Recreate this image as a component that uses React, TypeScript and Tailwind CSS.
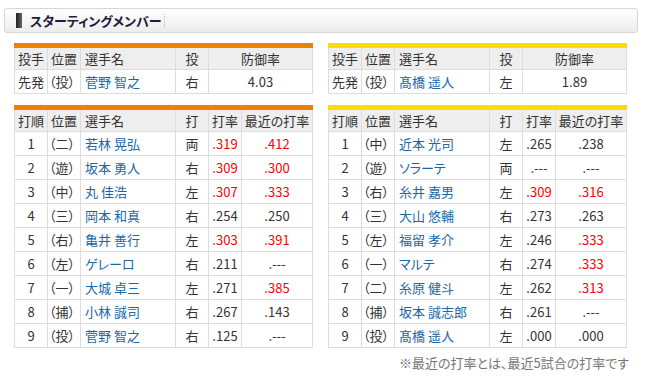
import React from 'react';

type Pitcher = { role: string; pos: string; name: string; hand: string; era: string };
type Batter = { no: number; pos: string; name: string; hand: string; avg: string; recent: string };

const giantsPitcher: Pitcher = { role: '先発', pos: '（投）', name: '菅野 智之', hand: '右', era: '4.03' };
const tigersPitcher: Pitcher = { role: '先発', pos: '（投）', name: '髙橋 遥人', hand: '左', era: '1.89' };

const giants: Batter[] = [
  { no: 1, pos: '（二）', name: '若林 晃弘', hand: '両', avg: '.319', recent: '.412' },
  { no: 2, pos: '（遊）', name: '坂本 勇人', hand: '右', avg: '.309', recent: '.300' },
  { no: 3, pos: '（中）', name: '丸 佳浩', hand: '左', avg: '.307', recent: '.333' },
  { no: 4, pos: '（三）', name: '岡本 和真', hand: '右', avg: '.254', recent: '.250' },
  { no: 5, pos: '（右）', name: '亀井 善行', hand: '左', avg: '.303', recent: '.391' },
  { no: 6, pos: '（左）', name: 'ゲレーロ', hand: '右', avg: '.211', recent: '.---' },
  { no: 7, pos: '（一）', name: '大城 卓三', hand: '左', avg: '.271', recent: '.385' },
  { no: 8, pos: '（捕）', name: '小林 誠司', hand: '右', avg: '.267', recent: '.143' },
  { no: 9, pos: '（投）', name: '菅野 智之', hand: '右', avg: '.125', recent: '.---' },
];

const tigers: Batter[] = [
  { no: 1, pos: '（中）', name: '近本 光司', hand: '左', avg: '.265', recent: '.238' },
  { no: 2, pos: '（遊）', name: 'ソラーテ', hand: '両', avg: '.---', recent: '.---' },
  { no: 3, pos: '（右）', name: '糸井 嘉男', hand: '左', avg: '.309', recent: '.316' },
  { no: 4, pos: '（三）', name: '大山 悠輔', hand: '右', avg: '.273', recent: '.263' },
  { no: 5, pos: '（左）', name: '福留 孝介', hand: '左', avg: '.246', recent: '.333' },
  { no: 6, pos: '（一）', name: 'マルテ', hand: '右', avg: '.274', recent: '.333' },
  { no: 7, pos: '（二）', name: '糸原 健斗', hand: '左', avg: '.262', recent: '.313' },
  { no: 8, pos: '（捕）', name: '坂本 誠志郎', hand: '右', avg: '.261', recent: '.---' },
  { no: 9, pos: '（投）', name: '髙橋 遥人', hand: '左', avg: '.000', recent: '.000' },
];

const isHot = (v: string) => v !== '.---' && parseFloat(v) >= 0.3;

const th = 'h-[24px] border border-[#dddddd] bg-[#eeeeee] font-normal p-0 leading-none';
const td = 'h-[24px] border border-[#dddddd] bg-white p-0 leading-none';

function PitcherTable({ p, bar }: { p: Pitcher; bar: string }) {
  return (
    <table className={`w-[299px] table-fixed border-collapse border-t-[5px] ${bar}`}>
      <colgroup>
        <col className="w-[33px]" />
        <col className="w-[33px]" />
        <col className="w-[95px]" />
        <col className="w-[33px]" />
        <col />
      </colgroup>
      <thead>
        <tr>
          <th className={`${th} text-left pl-[3px]`}>投手</th>
          <th className={`${th} text-left pl-[3px]`}>位置</th>
          <th className={`${th} text-left pl-[4px]`}>選手名</th>
          <th className={`${th} text-center`}>投</th>
          <th className={`${th} text-center`}>防御率</th>
        </tr>
      </thead>
      <tbody>
        <tr>
          <td className={`${td} text-left pl-[3px]`}>{p.role}</td>
          <td className={`${td} text-left pl-[1px]`}>{p.pos}</td>
          <td className={`${td} text-left pl-[4px] text-[#1a68a8]`}>{p.name}</td>
          <td className={`${td} text-center`}>{p.hand}</td>
          <td className={`${td} text-center`}>{p.era}</td>
        </tr>
      </tbody>
    </table>
  );
}

function LineupTable({ rows, bar }: { rows: Batter[]; bar: string }) {
  return (
    <table className={`w-[299px] table-fixed border-collapse border-t-[5px] ${bar}`}>
      <colgroup>
        <col className="w-[33px]" />
        <col className="w-[33px]" />
        <col className="w-[95px]" />
        <col className="w-[33px]" />
        <col className="w-[33px]" />
        <col />
      </colgroup>
      <thead>
        <tr>
          <th className={`${th} text-left pl-[3px]`}>打順</th>
          <th className={`${th} text-left pl-[3px]`}>位置</th>
          <th className={`${th} text-left pl-[4px]`}>選手名</th>
          <th className={`${th} text-center`}>打</th>
          <th className={`${th} text-center`}>打率</th>
          <th className={`${th} text-center`}>最近の打率</th>
        </tr>
      </thead>
      <tbody>
        {rows.map((r) => (
          <tr key={r.no}>
            <td className={`${td} text-center`}>{r.no}</td>
            <td className={`${td} text-left pl-[1px]`}>{r.pos}</td>
            <td className={`${td} text-left pl-[4px] text-[#1a68a8]`}>{r.name}</td>
            <td className={`${td} text-center`}>{r.hand}</td>
            <td className={`${td} text-center ${isHot(r.avg) ? 'text-[#ff0000]' : ''}`}>{r.avg}</td>
            <td className={`${td} text-center ${isHot(r.recent) ? 'text-[#ff0000]' : ''}`}>{r.recent}</td>
          </tr>
        ))}
      </tbody>
    </table>
  );
}

export default function App() {
  return (
    <div className="w-[645px] h-[392px] bg-white pt-[8px] px-[4px] text-[#333333] text-[13px] font-['Noto_Sans_CJK_JP',sans-serif] [font-feature-settings:'palt']">
      <div className="h-[25px] w-[634px] rounded-[3px] border border-[#d6d6d6] bg-gradient-to-b from-white to-[#ececec] flex items-center pl-[11px]">
        <span className="w-[6px] h-[15px] bg-gradient-to-r from-[#222222] to-[#666666]" />
        <span className="ml-[8px] text-[13px] font-bold text-[#221a3c] leading-none">スターティングメンバー</span>
        <span className="ml-[3px] h-[13px] border-l border-dotted border-[#bbbbbb]" />
      </div>

      <div className="px-[10px] pt-[10px]">
        <div className="flex gap-[15px]">
          <PitcherTable p={giantsPitcher} bar="border-t-[#ee8100]" />
          <PitcherTable p={tigersPitcher} bar="border-t-[#ffdc00]" />
        </div>
        <div className="flex gap-[15px] mt-[11px]">
          <LineupTable rows={giants} bar="border-t-[#ee8100]" />
          <LineupTable rows={tigers} bar="border-t-[#ffdc00]" />
        </div>
        <p className="mt-[8px] text-right text-[13px] text-[#777777] leading-none pr-[2px]">※最近の打率とは、最近5試合の打率です</p>
      </div>
    </div>
  );
}
